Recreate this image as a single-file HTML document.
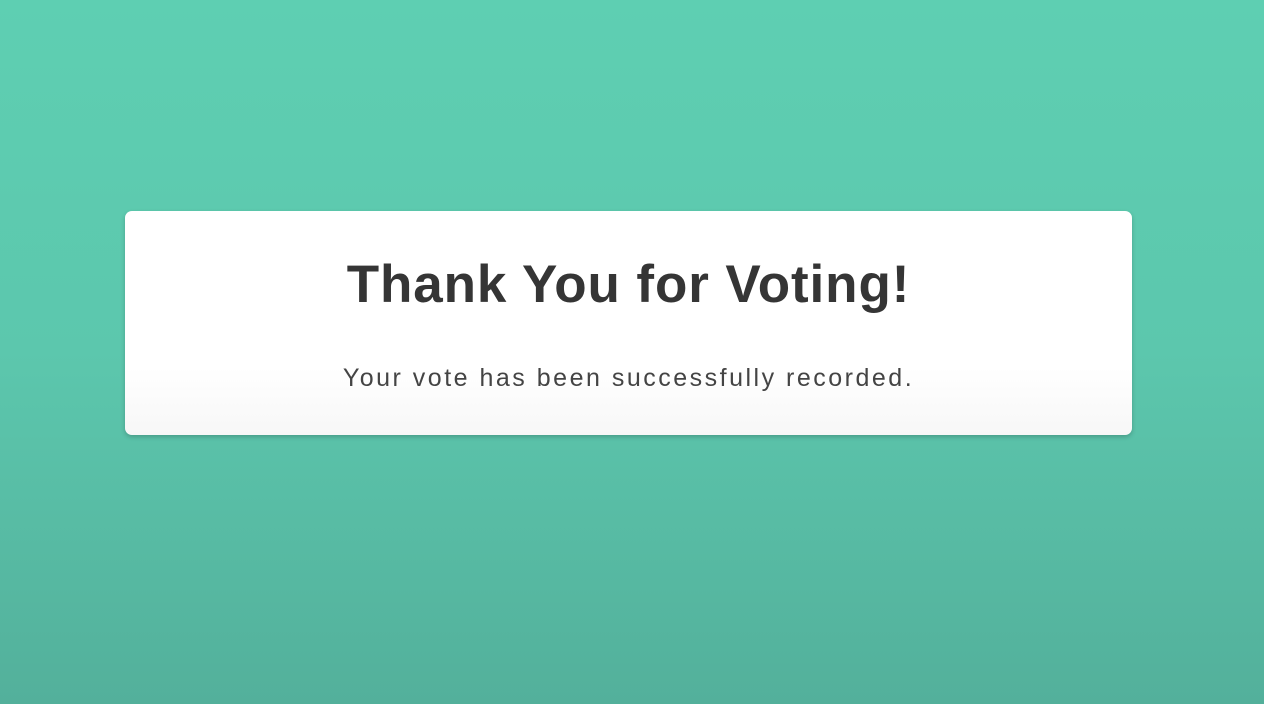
<!DOCTYPE html>
<html><head><meta charset="utf-8"><style>
html,body{margin:0;padding:0;width:1264px;height:704px;overflow:hidden}
body{background:linear-gradient(to bottom,#5ecfb2 0%,#5cc7ad 50%,#53b09b 100%);font-family:"Liberation Sans",sans-serif;position:relative}
.card{position:absolute;left:125px;top:211px;width:1007px;height:224px;background:linear-gradient(#fff 70%,#f7f7f7);border-radius:7px;box-shadow:0 2px 5px rgba(0,0,0,.2);text-align:center}
.t{position:absolute;left:0;right:0;top:43px;font-size:53px;font-weight:bold;color:#353535;letter-spacing:0.9px}
.s{position:absolute;left:0;right:0;top:153px;font-size:25px;color:#444;letter-spacing:2.5px}
</style></head><body>
<div class="card"><div class="t">Thank You for Voting!</div><div class="s">Your vote has been successfully recorded.</div></div>
</body></html>
